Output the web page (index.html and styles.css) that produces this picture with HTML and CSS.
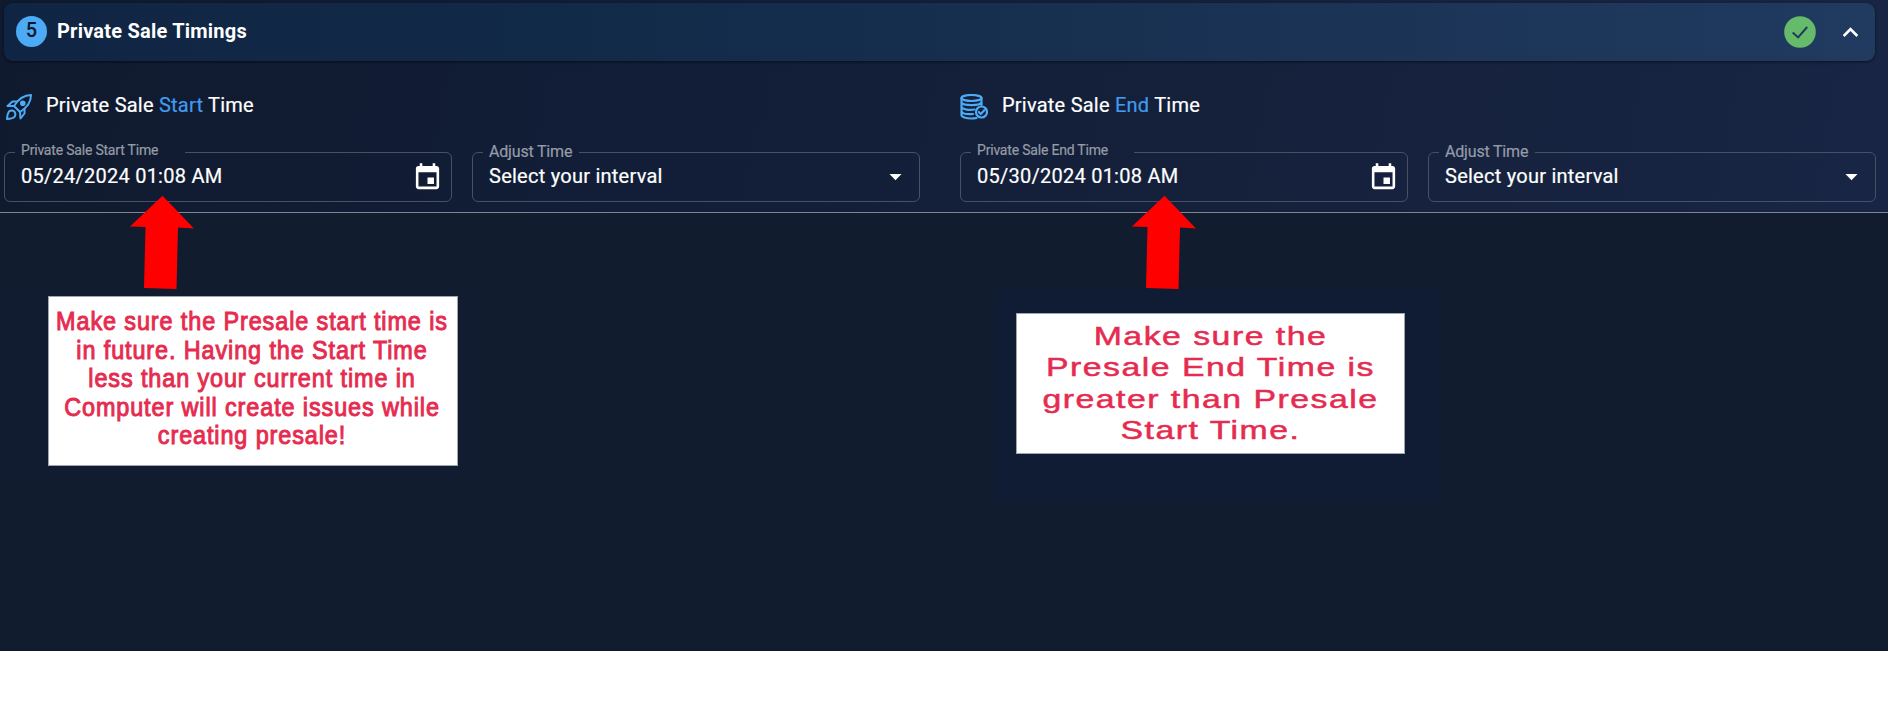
FILE: index.html
```
<!DOCTYPE html>
<html lang="en">
<head>
<meta charset="utf-8">
<title>Private Sale Timings</title>
<link rel="stylesheet" href="styles.css">
</head>
<body>
<main class="page">
  <section class="panel">
    <header class="bar">
      <span class="step">5</span>
      <h1 class="title">Private Sale Timings</h1>
      <svg class="done" viewBox="0 0 32 32"><circle cx="16" cy="16" r="15.8" fill="#66bb6a"/><path d="M8.7 16.4l5.4 5L23.2 11" fill="none" stroke="#1e3a5c" stroke-width="2"/></svg>
      <svg class="chevron" viewBox="0 0 24 24"><path fill="#fff" d="M12 8l-6 6 1.41 1.41L12 10.83l4.59 4.58L18 14z"/></svg>
    </header>
    <div class="groups">
      <div class="group">
        <h2 class="heading">
          <svg class="rocket" viewBox="0 0 26 26" fill="none" stroke="#4dabf5" stroke-width="2" stroke-linejoin="round" stroke-linecap="round"><path d="M25 1C19 1 13 4 8 12L14 18C22 13 25 7 25 1Z"/><circle cx="16.8" cy="9.2" r="1.8" fill="#4dabf5"/><path d="M11 7.5L6.5 7.5L1.5 12L8 12M18.5 15L18.5 19.5L14.5 24.5L14 18M3 17.5C1.5 19.5 1.2 22 1 25C4 24.8 6.5 24.5 8.3 23C10.5 20.5 9 16.5 6 16.5C4.8 16.5 3.7 16.8 3 17.5Z"/></svg>
          <span>Private Sale <em>Start</em> Time</span>
        </h2>
        <div class="fields">
          <fieldset class="field">
            <legend class="small start">Private Sale Start Time</legend>
            <div class="value"><span class="date">05/24/2024 01:08 AM</span><svg class="cal" viewBox="0 0 24 24"><path fill="#fff" d="M17 12h-5v5h5v-5zM16 1v2H8V1H6v2H5c-1.11 0-1.99.9-1.99 2L3 19c0 1.1.89 2 2 2h14c1.1 0 2-.9 2-2V5c0-1.1-.9-2-2-2h-1V1h-2zm3 18H5V8h14v11z"/></svg></div>
          </fieldset>
          <fieldset class="field">
            <legend class="adjust">Adjust Time</legend>
            <div class="value"><span class="choice">Select your interval</span><svg class="drop" viewBox="0 0 24 24"><path fill="#fff" d="M7 10l5 5 5-5z"/></svg></div>
          </fieldset>
        </div>
      </div>
      <div class="group">
        <h2 class="heading">
          <svg class="coins" viewBox="0 0 28 26" fill="none" stroke="#4dabf5" stroke-width="2.2" stroke-linecap="round"><ellipse cx="11.5" cy="4" rx="10" ry="3"/><path d="M1.5 4V21C1.5 23 6 24.5 11.5 24.5C13.5 24.5 15 24.3 16.500 24M21.5 4V11M1.5 8.5C3 12 20 12 21.5 8.5M1.5 13C3 15.5 9 16.5 14.5 15.5M1.5 17.5C3 20 8 20.5 13 20"/><circle cx="21.5" cy="18" r="5.5"/><path d="M18.8 18l2 2 3.5-3.8"/></svg>
          <span>Private Sale <em>End</em> Time</span>
        </h2>
        <div class="fields">
          <fieldset class="field">
            <legend class="small end">Private Sale End Time</legend>
            <div class="value"><span class="date">05/30/2024 01:08 AM</span><svg class="cal" viewBox="0 0 24 24"><path fill="#fff" d="M17 12h-5v5h5v-5zM16 1v2H8V1H6v2H5c-1.11 0-1.99.9-1.99 2L3 19c0 1.1.89 2 2 2h14c1.1 0 2-.9 2-2V5c0-1.1-.9-2-2-2h-1V1h-2zm3 18H5V8h14v11z"/></svg></div>
          </fieldset>
          <fieldset class="field">
            <legend class="adjust">Adjust Time</legend>
            <div class="value"><span class="choice">Select your interval</span><svg class="drop" viewBox="0 0 24 24"><path fill="#fff" d="M7 10l5 5 5-5z"/></svg></div>
          </fieldset>
        </div>
      </div>
    </div>
  </section>
  <svg class="arrow arrow-start" viewBox="0 0 66 95"><path fill="#f00" d="M33.5 .7L65 33.5L49 32.5L47.5 94L15 93L16.5 32L1 31.5Z"/></svg>
  <svg class="arrow arrow-end" viewBox="0 0 66 95"><path fill="#f00" d="M33.5 .7L65 33.5L49 32.5L47.5 94L15 93L16.5 32L1 31.5Z"/></svg>
  <div class="notes">
    <div class="backdrop backdrop-start">
      <p class="note note-start"><span>Make sure the Presale start time is</span><span>in future. Having the Start Time</span><span>less than your current time in</span><span>Computer will create issues while</span><span>creating presale!</span></p>
    </div>
    <div class="backdrop backdrop-end">
      <p class="note note-end"><span>Make sure the</span><span>Presale End Time is</span><span>greater than Presale</span><span>Start Time.</span></p>
    </div>
  </div>
</main>
</body>
</html>
```
FILE: styles.css
```
* { box-sizing: border-box; }
body { margin: 0; background: #fff; font-family: Roboto, sans-serif; color: #fff; }
svg { display: block; flex: none; }
.page { position: relative; height: 651px; background: #111c2e; overflow: hidden; }
.panel { height: 213px; padding: 3px 13px 0 4px; border-bottom: 1px solid #7f8592; background: linear-gradient(100deg, #101a2e, #121e38 35%, #15213b 65%, #182544); }
.bar { display: flex; align-items: center; height: 58px; padding: 0 9px 0 12px; border-radius: 9px; background: linear-gradient(90deg, #102543, #112a48 30%, #1a3354 68%, #203a60); box-shadow: 0 1px 3px rgba(0,0,0,.55); }
.step { width: 31px; height: 31px; margin-bottom: 1px; border-radius: 50%; background: #4dabf5; color: #0b1729; font-size: 20px; font-weight: 500; line-height: 29px; text-align: center; }
.title { margin: 0 auto 3px 10px; font-size: 20px; font-weight: 700; line-height: 28px; letter-spacing: .22px; }
.done { width: 32px; height: 32px; margin-right: 19px; }
.chevron { width: 31px; height: 31px; }
.groups { display: grid; grid-template-columns: 915px 915px; gap: 41px; }
.heading { display: flex; align-items: center; height: 28px; margin: 30px 0 23px; font-size: 20px; font-weight: 400; line-height: 28px; letter-spacing: .23px; -webkit-text-stroke: .2px; }
.heading em { font-style: normal; color: #419bee; }
.rocket { width: 26px; height: 26px; margin: 3px 14px 0 2px; }
.coins { width: 29px; height: 26px; margin: 3px 12px 0 0; padding-right: 1px; }
.coins + span { padding-left: 1px; }
.fields { display: grid; grid-template-columns: 448px 448px; gap: 20px; }
.field { min-width: 0; height: 60px; margin: 0; padding: 0 11px 0 10px; border: 1px solid #475163; border-radius: 6px; }
legend { height: 20px; padding: 0 0 0 6px; color: #959ba7; white-space: nowrap; }
.small { font-size: 14px; line-height: 17px; letter-spacing: -.2px; -webkit-text-stroke: .2px; }
.start { width: 170px; }
.end { width: 163px; }
.adjust { width: 96px; font-size: 16px; line-height: 19px; letter-spacing: -.18px; -webkit-text-stroke: .2px; }
.value { display: flex; justify-content: space-between; padding-left: 6px; height: 28px; font-size: 20px; line-height: 28px; letter-spacing: .25px; -webkit-text-stroke: .2px; }
.cal { width: 31px; height: 31px; margin-right: -3px; }
.drop { width: 29px; height: 29px; margin-right: -2px; }
.arrow { position: absolute; top: 195px; width: 66px; height: 95px; }
.arrow-start { left: 129px; }
.arrow-end { left: 1130.5px; }
.notes { display: flex; justify-content: space-between; padding: 76px 449px 0 0; }
.backdrop { background: #101c33; }
.backdrop-start { width: 486px; height: 201px; padding: 7px 0 0 48px; background: #111c30; }
.backdrop-end { width: 445px; height: 212px; padding: 24px 0 0 22px; }
.note { margin: 0; border: 1px solid #9ca5b0; background: #fff; color: #e52c50; font-family: "Liberation Sans", Arial, sans-serif; font-size: 26px; text-align: center; white-space: nowrap; }
.note span { display: block; }
.note-start { width: 410px; height: 170px; padding-top: 10px; line-height: 28.5px; letter-spacing: 1px; -webkit-text-stroke: 1px #e52c50; }
.note-start span { margin: 0 -30px 0 -32px; transform: scaleX(.9); }
.note-end { width: 389px; height: 141px; padding-top: 7px; line-height: 31.4px; letter-spacing: 1.15px; -webkit-text-stroke: .5px #e52c50; }
.note-end span { transform: scaleX(1.3); }
```
